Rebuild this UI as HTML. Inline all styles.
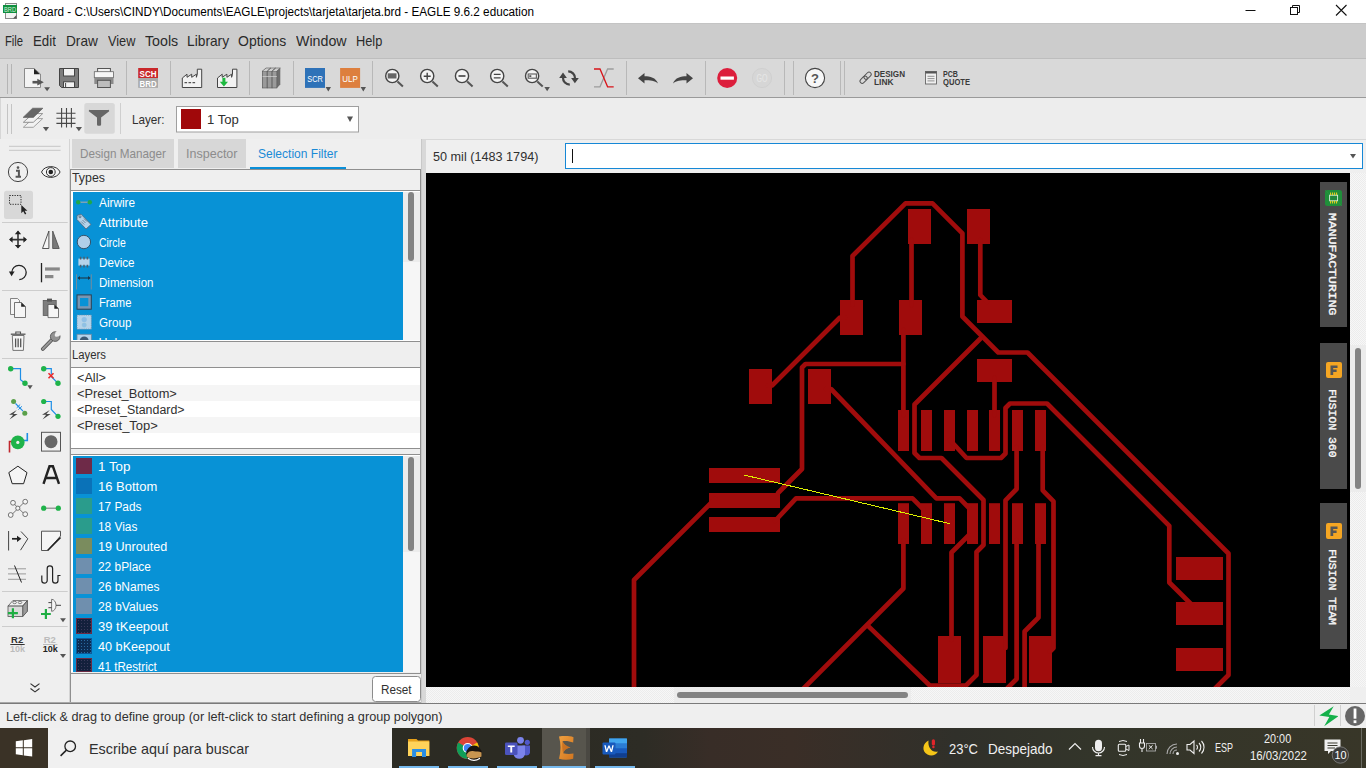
<!DOCTYPE html>
<html><head><meta charset="utf-8"><title>EAGLE</title>
<style>
*{margin:0;padding:0;box-sizing:border-box}
html,body{width:1366px;height:768px;overflow:hidden;background:#efefef;font-family:"Liberation Sans",sans-serif;position:relative}
.a{position:absolute}
.t{position:absolute;white-space:nowrap;line-height:1;font-family:"Liberation Sans",sans-serif}
svg{display:block}
</style></head><body>
<div class="a" style="left:0px;top:0px;width:1366px;height:23px;background:#ffffff;"></div>
<div class="a" style="left:0px;top:23px;width:1366px;height:35px;background:#cccccc;"></div>
<div class="a" style="left:0px;top:23px;width:1366px;height:1px;background:#c4c4c4;"></div>
<div class="a" style="left:0px;top:58px;width:1366px;height:1px;background:#bdbdbd;"></div>
<div class="a" style="left:0px;top:59px;width:1366px;height:38px;background:#d9d9d9;"></div>
<div class="a" style="left:0px;top:97px;width:1366px;height:1px;background:#9a9a9a;"></div>
<div class="a" style="left:0px;top:98px;width:1366px;height:41px;background:#ededed;"></div>
<div class="a" style="left:0px;top:139px;width:1366px;height:1px;background:#d8d8d8;"></div>
<div class="a" style="left:0px;top:98px;width:1px;height:630px;background:#d6d6d6;"></div>
<svg class="a" style="left:0px;top:0px;" width="22" height="22" viewBox="0 0 22 22"><rect x="5.5" y="3.5" width="11" height="15" fill="#f4f4f4" stroke="#8a8a8a"/>
<path d="M13 18.5 L16.5 15 L16.5 18.5Z" fill="#555"/>
<rect x="3" y="5" width="14" height="8" fill="#0f8f3f"/>
<text x="10" y="11.6" font-size="6.5" fill="#d8f0d8" text-anchor="middle" font-family="Liberation Sans" textLength="12" lengthAdjust="spacingAndGlyphs">BRD</text></svg>
<span id="t1" class="t" style="left:23.00px;top:6.00px;font-size:12.00px;color:#000;font-weight:normal;transform:scaleX(0.9772);transform-origin:0 0;">2 Board - C:\Users\CINDY\Documents\EAGLE\projects\tarjeta\tarjeta.brd - EAGLE 9.6.2 education</span>
<svg class="a" style="left:1240px;top:0px;" width="120" height="22" viewBox="0 0 120 22"><path d="M5.5 10.5h10" stroke="#111" stroke-width="1"/>
<rect x="50.5" y="7.5" width="7" height="7" fill="none" stroke="#111"/>
<path d="M52.5 7.5v-2h7v7h-2" fill="none" stroke="#111"/>
<path d="M96 5 L106.5 15.5 M106.5 5 L96 15.5" stroke="#111" stroke-width="1.1"/></svg>
<span id="t2" class="t" style="left:5.10px;top:34.00px;font-size:14.50px;color:#2a2a2a;font-weight:normal;transform:scaleX(0.7743);transform-origin:0 0;">File</span>
<span id="t3" class="t" style="left:33.20px;top:34.00px;font-size:14.50px;color:#2a2a2a;font-weight:normal;transform:scaleX(0.9160);transform-origin:0 0;">Edit</span>
<span id="t4" class="t" style="left:66.10px;top:34.00px;font-size:14.50px;color:#2a2a2a;font-weight:normal;transform:scaleX(0.9396);transform-origin:0 0;">Draw</span>
<span id="t5" class="t" style="left:107.50px;top:34.00px;font-size:14.50px;color:#2a2a2a;font-weight:normal;transform:scaleX(0.8790);transform-origin:0 0;">View</span>
<span id="t6" class="t" style="left:144.50px;top:34.00px;font-size:14.50px;color:#2a2a2a;font-weight:normal;transform:scaleX(0.9805);transform-origin:0 0;">Tools</span>
<span id="t7" class="t" style="left:186.70px;top:34.00px;font-size:14.50px;color:#2a2a2a;font-weight:normal;transform:scaleX(0.9497);transform-origin:0 0;">Library</span>
<span id="t8" class="t" style="left:238.30px;top:34.00px;font-size:14.50px;color:#2a2a2a;font-weight:normal;transform:scaleX(0.9643);transform-origin:0 0;">Options</span>
<span id="t9" class="t" style="left:295.80px;top:34.00px;font-size:14.50px;color:#2a2a2a;font-weight:normal;transform:scaleX(0.9810);transform-origin:0 0;">Window</span>
<span id="t10" class="t" style="left:355.50px;top:34.00px;font-size:14.50px;color:#2a2a2a;font-weight:normal;transform:scaleX(0.8817);transform-origin:0 0;">Help</span>
<svg class="a" style="left:0px;top:56px;" width="1000" height="44" viewBox="0 56 1000 44"><path d="M7.5 64v30M11.5 64v30" stroke="#b4b4b4" stroke-width="1"/><path d="M126.5 61v34" stroke="#b8b8b8" stroke-width="1"/><path d="M170.5 61v34" stroke="#b8b8b8" stroke-width="1"/><path d="M249.5 61v34" stroke="#b8b8b8" stroke-width="1"/><path d="M293.5 61v34" stroke="#b8b8b8" stroke-width="1"/><path d="M372.5 61v34" stroke="#b8b8b8" stroke-width="1"/><path d="M626.5 61v34" stroke="#b8b8b8" stroke-width="1"/><path d="M705.5 61v34" stroke="#b8b8b8" stroke-width="1"/><path d="M784.5 61v34" stroke="#b8b8b8" stroke-width="1"/><path d="M793.5 61v34" stroke="#b8b8b8" stroke-width="1"/><path d="M840.5 61v34" stroke="#b8b8b8" stroke-width="1"/><path d="M844.5 61v34" stroke="#b8b8b8" stroke-width="1"/><path d="M24.5 68.5H34L40.5 74V87.5H24.5Z" fill="#f3f3f3" stroke="#8a8a8a"/><path d="M34 68.5L40 74.3H34Z" fill="#222"/><path d="M32.5 82.2H38.5" stroke="#555" stroke-width="2.6"/><path d="M37.3 78.8L43.8 82.2L37.3 85.6Z" fill="#555"/><path d="M44.2 87.3H50L47.1 91.3Z" fill="#555"/><path d="M59.5 68.5H78.5V87.5H61.5L59.5 85.5Z" fill="#7d7d7d" stroke="#444"/><rect x="63.5" y="68.5" width="11" height="7.5" fill="#f2f2f2" stroke="#444"/><rect x="63.5" y="81.8" width="11" height="5.7" fill="#f2f2f2" stroke="#444"/><path d="M65.6 83v4" stroke="#444" stroke-width="1"/><rect x="97.6" y="68.5" width="12.8" height="7.5" fill="#f2f2f2" stroke="#555"/><rect x="94.3" y="71.7" width="19.2" height="6" fill="#f6f6f6" stroke="#666" stroke-width="0.8"/><rect x="94.3" y="77.7" width="19.2" height="6.3" fill="#8a8a8a"/><rect x="97.6" y="80.3" width="12.8" height="7.2" fill="#bdbdbd" stroke="#555"/><rect x="138.2" y="68" width="19.8" height="10" fill="#c9282b"/><rect x="138.2" y="78" width="19.8" height="9.8" fill="#a9a9a9"/><text x="148.1" y="76.6" font-size="9" font-weight="bold" fill="#fff" text-anchor="middle" font-family="Liberation Sans" textLength="17" lengthAdjust="spacingAndGlyphs">SCH</text><text x="148.1" y="86.5" font-size="9" font-weight="bold" fill="#fff" text-anchor="middle" font-family="Liberation Sans" textLength="17" lengthAdjust="spacingAndGlyphs">BRD</text><path d="M182.3 87.5V78L187 74.2V77.3L191.7 74.2V77.3L196.4 74.2V77.3L197.3 74.2V69.2H201.7V87.5Z" fill="#f2f2f2" stroke="#444" stroke-width="1"/><path d="M217.5 87.5V78L222.2 74.2V77.3L226.9 74.2V77.3L231.6 74.2V77.3L232.5 74.2V69.2H236.9V87.5Z" fill="#f2f2f2" stroke="#444" stroke-width="1"/><path d="M184.5 82.6h2.6M188.5 82.6h2.6M192.5 82.6h2.6" stroke="#555" stroke-width="1.2"/><path d="M222.4 77.8h3v4h2.6l-4.1 4.6l-4.1-4.6h2.6z" fill="#1db93f"/><path d="M262.5 71.5L266 68H280.3V84.5L277 88H262.5Z" fill="#6e6e6e"/><rect x="262.3" y="71" width="4.8" height="17" fill="#9a9a9a" stroke="#555" stroke-width="0.6"/><rect x="267.2" y="71" width="4.8" height="17" fill="#9a9a9a" stroke="#555" stroke-width="0.6"/><rect x="272.1" y="71" width="4.8" height="17" fill="#9a9a9a" stroke="#555" stroke-width="0.6"/><path d="M262.5 71L266 68h4.8l-3.5 3M267.3 71l3.5-3h4.8l-3.5 3M272.2 71l3.5-3h4.6l-3.4 3" fill="#cfcfcf" stroke="#555" stroke-width="0.6"/><path d="M262.5 76.5h14.4" stroke="#d6d6d6" stroke-width="0.7"/><rect x="305" y="68" width="20" height="19.9" fill="#2e72b8"/><text x="315" y="81.6" font-size="9.5" fill="#fff" text-anchor="middle" font-family="Liberation Sans" textLength="15.5" lengthAdjust="spacingAndGlyphs">SCR</text><path d="M325.6 87.1H331L328.3 91.5Z" fill="#555"/><rect x="340.1" y="68" width="20" height="19.9" fill="#dd7f3e"/><text x="350.1" y="81.6" font-size="9.5" fill="#fff" text-anchor="middle" font-family="Liberation Sans" textLength="15.5" lengthAdjust="spacingAndGlyphs">ULP</text><path d="M360.6 87.1H366L363.3 91.5Z" fill="#555"/><circle cx="392.3" cy="76" r="6.6" fill="#f4f4f4" stroke="#444" stroke-width="1.4"/><path d="M397.5 81.6L402.9 86.6" stroke="#555" stroke-width="2"/><rect x="387.7" y="73.3" width="8.8" height="5.2" fill="#666"/><circle cx="427.2" cy="76" r="6.6" fill="#f4f4f4" stroke="#444" stroke-width="1.4"/><path d="M432.4 81.6L437.8 86.6" stroke="#555" stroke-width="2"/><path d="M423.7 76.2h7M427.2 72.7v7" stroke="#444" stroke-width="1.4"/><circle cx="462" cy="76" r="6.6" fill="#f4f4f4" stroke="#444" stroke-width="1.4"/><path d="M467.2 81.6L472.6 86.6" stroke="#555" stroke-width="2"/><path d="M458.5 76h7" stroke="#555" stroke-width="1.8"/><circle cx="497.2" cy="76" r="6.6" fill="#f4f4f4" stroke="#444" stroke-width="1.4"/><path d="M502.4 81.6L507.8 86.6" stroke="#555" stroke-width="2"/><path d="M493.8 74.3h6.8M493.8 77.8h6.8" stroke="#444" stroke-width="1.3"/><circle cx="532.1" cy="76" r="6.6" fill="#f4f4f4" stroke="#444" stroke-width="1.4"/><path d="M537.3 81.6L542.7 86.6" stroke="#555" stroke-width="2"/><rect x="528.2" y="74" width="8.2" height="4.2" fill="none" stroke="#666" stroke-width="1.2"/><rect x="529.3" y="75.2" width="2" height="1.8" fill="#555"/><path d="M544.4 87.1H549.9L547.15 91.2Z" fill="#555"/><path d="M563 77.5A6.8 6.8 0 0 0 569.8 84.6M568.2 71.4A6.8 6.8 0 0 1 575 78.2" fill="none" stroke="#444" stroke-width="2.2"/><path d="M559.2 77.9H566.9L563 72.4ZM571.1 78H578.8L574.9 83.2Z" fill="#444"/><path d="M594 86.8H600L607.6 69H613.7" fill="none" stroke="#9c9c9c" stroke-width="1.3"/><path d="M594 69H600L607.6 86.8H613.7" fill="none" stroke="#d8141a" stroke-width="1.3"/><path d="M638 78.2L644.5 73V76.2C650 76.2 656 77.5 658 83.5C655 80.8 650 80.3 644.5 80.3V83.5Z" fill="#444"/><path d="M693 78.2L686.5 73V76.2C681 76.2 675 77.5 673 83.5C676 80.8 681 80.3 686.5 80.3V83.5Z" fill="#444"/><circle cx="727.2" cy="78" r="10" fill="#dc1e3c"/><rect x="720.5" y="76.5" width="13.4" height="3.2" fill="#fff"/><circle cx="762" cy="78" r="9.6" fill="#d6d6d6" stroke="#cdcdcd" stroke-width="0.8"/><text x="762" y="81.8" font-size="10" fill="#e6e6e6" text-anchor="middle" font-family="Liberation Sans" textLength="11" lengthAdjust="spacingAndGlyphs">GO</text><circle cx="815" cy="78" r="9.6" fill="#f7f7f7" stroke="#444" stroke-width="1.1"/><text x="815" y="82.8" font-size="13" font-weight="bold" fill="#555" text-anchor="middle" font-family="Liberation Sans">?</text><g transform="rotate(-45 865.6 77.7)" fill="none" stroke="#555" stroke-width="1"><rect x="858.6" y="75.5" width="8.4" height="4.4" rx="2.2"/><rect x="864.2" y="75.5" width="8.4" height="4.4" rx="2.2"/></g><rect x="925.5" y="71.5" width="11" height="12.5" fill="#f0f0f0" stroke="#666" stroke-width="0.9"/><rect x="925.5" y="71.5" width="11" height="2" fill="#555"/><path d="M927.5 76.3h7M927.5 78.6h7M927.5 80.9h7" stroke="#777" stroke-width="0.8"/></svg>
<span id="t11" class="t" style="left:874.30px;top:70.00px;font-size:8.30px;color:#3a3a3a;font-weight:bold;transform:scaleX(0.9745);transform-origin:0 0;">DESIGN</span>
<span id="t12" class="t" style="left:874.30px;top:78.00px;font-size:8.30px;color:#3a3a3a;font-weight:bold;transform:scaleX(1.0073);transform-origin:0 0;">LINK</span>
<span id="t13" class="t" style="left:942.80px;top:70.00px;font-size:8.30px;color:#3a3a3a;font-weight:bold;transform:scaleX(0.8556);transform-origin:0 0;">PCB</span>
<span id="t14" class="t" style="left:942.80px;top:78.00px;font-size:8.30px;color:#3a3a3a;font-weight:bold;transform:scaleX(0.9148);transform-origin:0 0;">QUOTE</span>
<svg class="a" style="left:0px;top:98px;" width="370" height="41" viewBox="0 98 370 41"><path d="M7.5 104v30M11.5 104v30" stroke="#c4c4c4" stroke-width="1"/><path d="M23.3 127.3L33 118.6H42.7L33.3 127.3Z" fill="#f2f2f2" stroke="#999" stroke-width="0.9"/><path d="M23.3 122.3L33 113.6H42.7L33.3 122.3Z" fill="#f2f2f2" stroke="#888" stroke-width="0.9"/><path d="M23.1 117.4L32.6 108.2H42.9L33.4 117.4Z" fill="#666" stroke="#555" stroke-width="0.6"/><path d="M42.9 126.9H49.1L46 131.3Z" fill="#555"/><path d="M61.6 107.9v19.7M66.5 107.9v19.7M71.4 107.9v19.7M56.4 113.3h19.1M56.4 118.3h19.1M56.4 123.4h19.1" stroke="#474747" stroke-width="1.1"/><path d="M75.8 126.9H82L78.9 131.3Z" fill="#555"/><rect x="84.3" y="103.1" width="30.5" height="30.7" rx="2.5" fill="#d8d8d8"/><path d="M90 109.9H108A1 1 0 0 1 108.9 111.6L101.1 117.5V124.6A1.2 1.2 0 0 1 99.9 125.8H98.2A1.2 1.2 0 0 1 97 124.6V117.5L89.1 111.6A1 1 0 0 1 90 109.9Z" fill="#666"/><path d="M120.5 103v31" stroke="#cfcfcf" stroke-width="1"/><rect x="176.5" y="106.5" width="182" height="25.5" fill="#fff" stroke="#9f9f9f"/><rect x="181" y="109" width="20" height="20" fill="#a0080a"/><path d="M347 116.5H353L350 122Z" fill="#555"/></svg>
<span id="t15" class="t" style="left:132.00px;top:113.00px;font-size:13.00px;color:#303030;font-weight:normal;transform:scaleX(0.8993);transform-origin:0 0;">Layer:</span>
<span id="t16" class="t" style="left:207.30px;top:113.00px;font-size:13.00px;color:#303030;font-weight:normal;transform:scaleX(1.0070);transform-origin:0 0;">1 Top</span>
<div class="a" style="left:0px;top:139px;width:69px;height:564px;background:#efefef;"></div>
<div class="a" style="left:69px;top:139px;width:1px;height:564px;background:#d4d4d4;"></div>
<div class="a" style="left:70px;top:139px;width:351px;height:564px;background:#efefef;"></div>
<div class="a" style="left:72px;top:139px;width:101.6px;height:29.3px;background:#d7d7d7;"></div>
<div class="a" style="left:178px;top:139px;width:67.6px;height:29.3px;background:#d7d7d7;"></div>
<div class="a" style="left:250px;top:166.7px;width:96px;height:3px;background:#0a8fd8;"></div>
<span id="t17" class="t" style="left:80.40px;top:148.00px;font-size:12.80px;color:#8c8c8c;font-weight:normal;transform:scaleX(0.9137);transform-origin:0 0;">Design Manager</span>
<span id="t18" class="t" style="left:186.30px;top:148.00px;font-size:12.80px;color:#8c8c8c;font-weight:normal;transform:scaleX(0.9783);transform-origin:0 0;">Inspector</span>
<span id="t19" class="t" style="left:258.40px;top:148.00px;font-size:12.80px;color:#1a8ad6;font-weight:normal;transform:scaleX(0.9393);transform-origin:0 0;">Selection Filter</span>
<div class="a" style="left:70px;top:169px;width:351px;height:1px;background:#8f8f8f;"></div>
<div class="a" style="left:70px;top:169px;width:1px;height:172px;background:#8f8f8f;"></div>
<div class="a" style="left:420px;top:169px;width:1px;height:172px;background:#8f8f8f;"></div>
<div class="a" style="left:70px;top:190px;width:351px;height:1px;background:#8f8f8f;"></div>
<div class="a" style="left:70px;top:340.8px;width:351px;height:1px;background:#8f8f8f;"></div>
<span id="t20" class="t" style="left:72.30px;top:172.00px;font-size:12.50px;color:#303030;font-weight:normal;transform:scaleX(0.9892);transform-origin:0 0;">Types</span>
<div class="a" style="left:71px;top:191px;width:349px;height:149.8px;background:#ffffff;"></div>
<div class="a" style="left:73px;top:192px;width:330px;height:148px;background:#0892d6;"></div>
<div class="a" style="left:403px;top:192px;width:17px;height:148px;background:#f6f6f6;"></div>
<div class="a" style="left:403px;top:192px;width:17px;height:70px;background:#ececec;"></div>
<div class="a" style="left:408.1px;top:192.2px;width:6px;height:68.7px;background:#838383;border-radius:3px"></div>
<span id="t21" class="t" style="left:98.60px;top:197.00px;font-size:12.50px;color:#ffffff;font-weight:normal;transform:scaleX(0.9449);transform-origin:0 0;">Airwire</span>
<span id="t22" class="t" style="left:98.60px;top:217.00px;font-size:12.50px;color:#ffffff;font-weight:normal;transform:scaleX(1.0545);transform-origin:0 0;">Attribute</span>
<span id="t23" class="t" style="left:98.60px;top:237.00px;font-size:12.50px;color:#ffffff;font-weight:normal;transform:scaleX(0.8356);transform-origin:0 0;">Circle</span>
<span id="t24" class="t" style="left:98.60px;top:257.00px;font-size:12.50px;color:#ffffff;font-weight:normal;transform:scaleX(0.9315);transform-origin:0 0;">Device</span>
<span id="t25" class="t" style="left:98.60px;top:277.00px;font-size:12.50px;color:#ffffff;font-weight:normal;transform:scaleX(0.9228);transform-origin:0 0;">Dimension</span>
<span id="t26" class="t" style="left:98.60px;top:297.00px;font-size:12.50px;color:#ffffff;font-weight:normal;transform:scaleX(0.8969);transform-origin:0 0;">Frame</span>
<span id="t27" class="t" style="left:98.60px;top:317.00px;font-size:12.50px;color:#ffffff;font-weight:normal;transform:scaleX(0.9324);transform-origin:0 0;">Group</span>
<div class="a" style="left:73px;top:332px;width:330px;height:8px;overflow:hidden"><span class="t" style="left:25.6px;top:5.00px;font-size:12.5px;color:#fff">Holes</span></div>
<svg class="a" style="left:73px;top:192px" width="330" height="148" viewBox="73 192 330 148"><path d="M79.5 202.2H88.5" stroke="#9aa7b0" stroke-width="1.2"/><circle cx="78.2" cy="202.2" r="2.2" fill="#1ea84a"/><circle cx="89.8" cy="202.2" r="2.2" fill="#1ea84a"/><path d="M77 215.5L81 214.2L91 224.5L86 229L77 219.5Z" fill="#b5d3ea" stroke="#567" stroke-width="0.8"/><circle cx="80" cy="216.8" r="1" fill="none" stroke="#345" stroke-width="0.6"/><path d="M82.5 220l3 3M84 218.6l3 3M81.2 221.5l3 3" stroke="#456" stroke-width="0.6"/><circle cx="83.9" cy="242" r="6.7" fill="#b0cfe9" stroke="#2f4a60" stroke-width="0.9"/><rect x="78.4" y="258.6" width="11.2" height="7" fill="#b5d3ea"/><path d="M80.6 256.8v10.6M84 256.8v10.6M87.4 256.8v10.6" stroke="#4a6070" stroke-width="1.5" stroke-dasharray="2.6 5.4 2.6"/><path d="M76.5 274.3v15.2M91.3 274.3v15.2" stroke="#7a8c9a" stroke-width="0.9"/><path d="M78 278H90" stroke="#1d3548" stroke-width="1.1"/><path d="M77.5 278l2.5-2v4zM90.5 278l-2.5-2v4z" fill="#1d3548"/><rect x="77" y="294.9" width="14.3" height="14.3" fill="#7897b4" stroke="#2a3f52" stroke-width="1"/><rect x="80" y="298" width="8.3" height="8.2" fill="#0892d6"/><rect x="77" y="315" width="14.4" height="14.2" fill="#b5d3ea" stroke="#6a8aa4" stroke-width="0.8" stroke-dasharray="1.2 1"/><circle cx="84.2" cy="319.5" r="2.6" fill="#8fc0e6"/><circle cx="84.2" cy="325" r="2.3" fill="#8fc0e6" stroke="#9cc" stroke-width="0.3"/><rect x="77" y="334.3" width="14.4" height="8" fill="#b5d3ea" stroke="#6a8aa4" stroke-width="0.8"/><circle cx="84.2" cy="341" r="4.5" fill="#3d5a73"/></svg>
<div class="a" style="left:70px;top:366.8px;width:351px;height:1px;background:#8f8f8f;"></div>
<div class="a" style="left:70px;top:341px;width:1px;height:362px;background:#8f8f8f;"></div>
<div class="a" style="left:420px;top:341px;width:1px;height:333px;background:#8f8f8f;"></div>
<span id="t28" class="t" style="left:71.50px;top:349.00px;font-size:12.50px;color:#303030;font-weight:normal;transform:scaleX(0.9059);transform-origin:0 0;">Layers</span>
<div class="a" style="left:71px;top:367.8px;width:349px;height:80.3px;background:#ffffff;"></div>
<div class="a" style="left:72px;top:385px;width:348px;height:16px;background:#f5f5f5;"></div>
<div class="a" style="left:72px;top:417px;width:348px;height:16px;background:#f5f5f5;"></div>
<span id="t29" class="t" style="left:76.50px;top:372.00px;font-size:12.50px;color:#303030;font-weight:normal;transform:scaleX(1.0140);transform-origin:0 0;">&lt;All&gt;</span>
<span id="t30" class="t" style="left:76.50px;top:388.00px;font-size:12.50px;color:#303030;font-weight:normal;transform:scaleX(1.0259);transform-origin:0 0;">&lt;Preset_Bottom&gt;</span>
<span id="t31" class="t" style="left:76.50px;top:404.00px;font-size:12.50px;color:#303030;font-weight:normal;transform:scaleX(0.9924);transform-origin:0 0;">&lt;Preset_Standard&gt;</span>
<span id="t32" class="t" style="left:76.50px;top:420.00px;font-size:12.50px;color:#303030;font-weight:normal;transform:scaleX(1.0393);transform-origin:0 0;">&lt;Preset_Top&gt;</span>
<div class="a" style="left:70px;top:448px;width:351px;height:1px;background:#8f8f8f;"></div>
<div class="a" style="left:70px;top:454.3px;width:351px;height:1px;background:#8f8f8f;"></div>
<div class="a" style="left:71px;top:455.3px;width:349px;height:217px;background:#ffffff;"></div>
<div class="a" style="left:73px;top:456px;width:330px;height:215.5px;background:#0892d6;"></div>
<div class="a" style="left:403px;top:456px;width:17px;height:216px;background:#f6f6f6;"></div>
<div class="a" style="left:403px;top:456px;width:17px;height:96px;background:#ececec;"></div>
<div class="a" style="left:408.1px;top:456.5px;width:6px;height:94px;background:#838383;border-radius:3px"></div>
<div class="a" style="left:70px;top:672.5px;width:351px;height:1px;background:#8f8f8f;"></div>
<span id="t33" class="t" style="left:98.40px;top:461.00px;font-size:12.50px;color:#ffffff;font-weight:normal;transform:scaleX(1.0672);transform-origin:0 0;">1 Top</span>
<div class="a" style="left:76px;top:458px;width:16px;height:16px;background:#6e2a48;"></div>
<span id="t34" class="t" style="left:98.40px;top:481.00px;font-size:12.50px;color:#ffffff;font-weight:normal;transform:scaleX(1.0389);transform-origin:0 0;">16 Bottom</span>
<div class="a" style="left:76px;top:478px;width:16px;height:16px;background:#0a72b8;"></div>
<span id="t35" class="t" style="left:98.40px;top:501.00px;font-size:12.50px;color:#ffffff;font-weight:normal;transform:scaleX(0.9460);transform-origin:0 0;">17 Pads</span>
<div class="a" style="left:76px;top:498px;width:16px;height:16px;background:#2a9c8c;"></div>
<span id="t36" class="t" style="left:98.40px;top:521.00px;font-size:12.50px;color:#ffffff;font-weight:normal;transform:scaleX(0.9501);transform-origin:0 0;">18 Vias</span>
<div class="a" style="left:76px;top:518px;width:16px;height:16px;background:#2a9c8c;"></div>
<span id="t37" class="t" style="left:98.40px;top:541.00px;font-size:12.50px;color:#ffffff;font-weight:normal;transform:scaleX(1.0071);transform-origin:0 0;">19 Unrouted</span>
<div class="a" style="left:76px;top:538px;width:16px;height:16px;background:#7a8c5e;"></div>
<span id="t38" class="t" style="left:98.40px;top:561.00px;font-size:12.50px;color:#ffffff;font-weight:normal;transform:scaleX(0.9513);transform-origin:0 0;">22 bPlace</span>
<div class="a" style="left:76px;top:558px;width:16px;height:16px;background:#6f8fae;"></div>
<span id="t39" class="t" style="left:98.40px;top:581.00px;font-size:12.50px;color:#ffffff;font-weight:normal;transform:scaleX(0.9603);transform-origin:0 0;">26 bNames</span>
<div class="a" style="left:76px;top:578px;width:16px;height:16px;background:#6f8fae;"></div>
<span id="t40" class="t" style="left:98.40px;top:601.00px;font-size:12.50px;color:#ffffff;font-weight:normal;transform:scaleX(0.9753);transform-origin:0 0;">28 bValues</span>
<div class="a" style="left:76px;top:598px;width:16px;height:16px;background:#6f8fae;"></div>
<span id="t41" class="t" style="left:98.40px;top:621.00px;font-size:12.50px;color:#ffffff;font-weight:normal;transform:scaleX(1.0412);transform-origin:0 0;">39 tKeepout</span>
<div class="a" style="left:76px;top:618px;width:16px;height:16px;background:#13203c;border:1px solid #6a2a44;background-image:radial-gradient(#3a3a5a 0.6px,transparent 0.7px);background-size:3px 3px"></div>
<span id="t42" class="t" style="left:98.40px;top:641.00px;font-size:12.50px;color:#ffffff;font-weight:normal;transform:scaleX(1.0126);transform-origin:0 0;">40 bKeepout</span>
<div class="a" style="left:76px;top:638px;width:16px;height:16px;background:#0c2c52;border:1px solid #0a5a9a;background-image:radial-gradient(#2a6aa0 0.6px,transparent 0.7px);background-size:3px 3px"></div>
<div class="a" style="left:73px;top:656px;width:330px;height:15px;overflow:hidden"><span id="tr41" class="t" style="left:25.4px;top:5.00px;font-size:12.5px;color:#fff;transform:scaleX(0.93);transform-origin:0 0">41 tRestrict</span></div>
<div class="a" style="left:76px;top:658px;width:16px;height:13.5px;background:#13203c;border:1px solid #6a2a44;background-image:radial-gradient(#3a3a5a 0.6px,transparent 0.7px);background-size:3px 3px"></div>
<div class="a" style="left:372px;top:676px;width:48.5px;height:25.5px;background:#fff;border:1.4px solid #8c8c8c;border-radius:3.5px"></div>
<span id="t43" class="t" style="left:381.40px;top:684.00px;font-size:12.50px;color:#303030;font-weight:normal;transform:scaleX(0.9370);transform-origin:0 0;">Reset</span>
<div class="a" style="left:0px;top:702px;width:1366px;height:1px;background:#a8a8a8;"></div>
<div class="a" style="left:0px;top:703px;width:1366px;height:1px;background:#7a7a7a;"></div>
<svg class="a" style="left:0px;top:139px;" width="70" height="564" viewBox="0 139 70 564"><path d="M9 146.3H60.6M9 150.3H60.6" stroke="#c6c6c6" stroke-width="1"/><path d="M2 222.5H67.7" stroke="#cdcdcd" stroke-width="1"/><path d="M2 290.5H67.7" stroke="#cdcdcd" stroke-width="1"/><path d="M2 358.5H67.7" stroke="#cdcdcd" stroke-width="1"/><path d="M2 591.5H67.7" stroke="#cdcdcd" stroke-width="1"/><path d="M2 626.5H67.7" stroke="#cdcdcd" stroke-width="1"/><circle cx="18" cy="172" r="9.6" fill="none" stroke="#444" stroke-width="1"/><circle cx="18" cy="167.6" r="1.3" fill="#555"/><path d="M16 170.8H18.9V176.6M15.6 176.8H21" stroke="#555" stroke-width="2" fill="none"/><path d="M41.5 172C44.5 164.8 57.1 164.8 60.1 172C57.1 179.2 44.5 179.2 41.5 172Z" fill="#f5f5f5" stroke="#333" stroke-width="1"/><circle cx="50.8" cy="172" r="4.4" fill="none" stroke="#333" stroke-width="1"/><circle cx="50.8" cy="172" r="2.3" fill="#222"/><rect x="4" y="190.8" width="29" height="28.2" rx="2.5" fill="#d8d8d8"/><rect x="9.5" y="195.5" width="11.5" height="8.8" fill="none" stroke="#333" stroke-width="1" stroke-dasharray="1.3 1.2"/><path d="M21.3 205V213.3L23.2 211.3L25 214.5L26.3 213.8L24.6 210.7H27.4Z" fill="#222"/><path d="M10 239.6H26M18 231.6V247.6" stroke="#333" stroke-width="1.6"/><path d="M9 239.6L12.6 236.4V242.8ZM27 239.6L23.4 236.4V242.8ZM18 230.6L14.8 234.2H21.2ZM18 248.6L14.8 245H21.2Z" fill="#222"/><path d="M48.9 231L42.5 248.5H48.9Z" fill="#f5f5f5" stroke="#444" stroke-width="0.9"/><path d="M52.7 231L59.2 248.5H52.7Z" fill="#7a7a7a" stroke="#555" stroke-width="0.9"/><path d="M11.8 272.4A7.2 7.2 0 1 1 19.3 279.7" fill="none" stroke="#222" stroke-width="1.3"/><path d="M8.9 271.6H14.6L11.6 276.2Z" fill="#222"/><path d="M41.5 263V282.3" stroke="#222" stroke-width="1.3"/><rect x="45" y="267.4" width="14.8" height="3.2" fill="#888"/><rect x="45" y="275" width="8.4" height="3.2" fill="#888"/><path d="M10.5 298.5H17.5L19.5 300.5V314.5H10.5Z" fill="#f5f5f5" stroke="#666" stroke-width="0.8"/><path d="M14.5 302.5H21.5L25.5 306.5V317.5H14.5Z" fill="#f5f5f5" stroke="#555" stroke-width="0.8"/><path d="M21.2 302.5L25.5 306.8H21.2Z" fill="#222"/><rect x="43.2" y="300.4" width="13" height="15" fill="#7d7d7d" stroke="#555" stroke-width="0.8"/><rect x="47" y="298.6" width="5" height="3" fill="#555"/><path d="M48 304.5H54.5L58.5 308.5V317.6H48Z" fill="#f5f5f5" stroke="#555" stroke-width="0.8"/><path d="M54.3 304.5L58.5 308.7H54.3Z" fill="#222"/><path d="M10.8 334.2H25.5" stroke="#555" stroke-width="1.3"/><path d="M15.8 334V332H20.5V334" fill="none" stroke="#555" stroke-width="1.1"/><path d="M12.3 335.5H24L23.4 350.4H12.9Z" fill="#f5f5f5" stroke="#666" stroke-width="0.9"/><path d="M15.6 338.5V347.2M18.15 338.5V347.2M20.7 338.5V347.2" stroke="#555" stroke-width="1.3"/><path d="M42.8 349L51.6 340" stroke="#555" stroke-width="3.8" stroke-linecap="round"/><path d="M42.8 349L51.6 340" stroke="#999" stroke-width="1.8" stroke-linecap="round"/><circle cx="55.2" cy="336.6" r="4.8" fill="#929292" stroke="#555" stroke-width="0.9"/><circle cx="56.6" cy="334.9" r="1.9" fill="#efefef"/><path d="M55 333.1L57.6 330.3L61.4 334.2L58.5 336.6Z" fill="#efefef"/><path d="M10.7 368.7H20.5V379.6L25 383.3" fill="none" stroke="#1e8ee6" stroke-width="1.2"/><circle cx="10.7" cy="368.7" r="2.7" fill="#1fb34a"/><circle cx="25" cy="383.3" r="2.7" fill="#1fb34a"/><path d="M27.3 385.2H32.7L30 389.2Z" fill="#555"/><path d="M43.7 368.7H51.3V374.5M51.3 376.5L58 383.3" fill="none" stroke="#1e8ee6" stroke-width="1.2"/><circle cx="43.7" cy="368.7" r="2.7" fill="#1fb34a"/><circle cx="58" cy="383.3" r="2.7" fill="#1fb34a"/><path d="M48.5 373.3L53.5 378.3M53.5 373.3L48.5 378.3" stroke="#ea2a2a" stroke-width="1.6"/><circle cx="13.6" cy="401.5" r="2.5" fill="#5aa04a"/><circle cx="24.8" cy="413.2" r="2.5" fill="#5aa04a"/><path d="M15.5 403.5L23 411.2" stroke="#1e8ee6" stroke-width="1.1"/><path d="M16.7 407.8L20.2 404.5M18.4 409.6L21.9 406.3" stroke="#1e8ee6" stroke-width="1"/><path d="M16.8 410L9 414.8L13.2 414.8L9.5 419.5L17.6 414L13.3 414Z" fill="#444"/><path d="M43.7 401.5H51.3V409.5L57.8 416.3" fill="none" stroke="#1e8ee6" stroke-width="1.2"/><circle cx="43.7" cy="401.5" r="2.6" fill="#1fb34a"/><circle cx="58" cy="416.3" r="2.6" fill="#1fb34a"/><path d="M49.8 410L42 414.8L46.2 414.8L42.5 419.5L50.6 414L46.3 414Z" fill="#444"/><path d="M9.5 452.5V441.5H12" fill="none" stroke="#c0272d" stroke-width="1.6"/><path d="M23 440.5H27.3V433" fill="none" stroke="#1e8ee6" stroke-width="1.6"/><circle cx="17.8" cy="442.4" r="6.8" fill="#1fb34a"/><circle cx="17.8" cy="442.4" r="1.6" fill="#efefef"/><rect x="41.5" y="432.3" width="19" height="18.8" fill="#f0f0f0" stroke="#555" stroke-width="1"/><circle cx="51" cy="441.7" r="6.5" fill="#666"/><path d="M17.9 466.2L27 472.6L23.6 483.7H12.2L8.8 472.6Z" fill="#f5f5f5" stroke="#222" stroke-width="1"/><path d="M43.5 483.8L49.5 466.3H52.9L59 483.8M45.7 478H56.8" fill="none" stroke="#222" stroke-width="2.4"/><path d="M11 500.8L25.7 515.4M25.7 500.8L11 515.4" stroke="#666" stroke-width="0.9"/><circle cx="13" cy="502.8" r="2.4" fill="#f5f5f5" stroke="#555" stroke-width="0.8"/><circle cx="25.2" cy="501.7" r="2.4" fill="#f5f5f5" stroke="#555" stroke-width="0.8"/><circle cx="10.7" cy="515" r="2.4" fill="#f5f5f5" stroke="#555" stroke-width="0.8"/><circle cx="25.2" cy="514.2" r="2.4" fill="#f5f5f5" stroke="#555" stroke-width="0.8"/><circle cx="17.8" cy="508.2" r="2.1" fill="#f5f5f5" stroke="#555" stroke-width="0.8"/><path d="M43.8 508.2H58" stroke="#888" stroke-width="1.2"/><circle cx="43.7" cy="508.2" r="2.6" fill="#1fb34a"/><circle cx="58.3" cy="508.2" r="2.6" fill="#1fb34a"/><path d="M8.6 531V550.5" stroke="#444" stroke-width="1"/><path d="M12 538.8H17.5" stroke="#222" stroke-width="1.7"/><path d="M17 535.7L21.4 538.8L17 541.9Z" fill="#222"/><path d="M21 531.5L27.8 538.8L20.5 550.2" fill="none" stroke="#444" stroke-width="1"/><path d="M41.5 531.2H60.5V536L47.6 550.5H41.5Z" fill="#f5f5f5" stroke="#444" stroke-width="0.9"/><path d="M47.6 550.5L60.5 537.5" stroke="#222" stroke-width="1.7"/><path d="M8 568.8H26M8 573.9H26M8 579.3H26" stroke="#9a9a9a" stroke-width="1"/><path d="M14.5 565.5L21.5 582.5" stroke="#222" stroke-width="1"/><path d="M41.8 575.5V580.5A2.7 2.7 0 0 0 47.2 580.5V568.5A2.7 2.7 0 0 1 52.6 568.5V580.5A2.7 2.7 0 0 0 58 580.5V575.5H60.5" fill="none" stroke="#222" stroke-width="1.2"/><path d="M8 606.1L12.8 600.6H27.4L22.7 606.1Z" fill="#efefef" stroke="#555" stroke-width="0.8"/><path d="M22.7 606.1L27.4 600.6V611.3L22.7 616.6Z" fill="#9a9a9a" stroke="#444" stroke-width="0.8"/><rect x="8" y="606.1" width="14.7" height="10.5" fill="#dadada" stroke="#555" stroke-width="0.8"/><ellipse cx="14.6" cy="602.5" rx="1.8" ry="1.2" fill="none" stroke="#555" stroke-width="0.7"/><ellipse cx="20" cy="602.5" rx="1.8" ry="1.2" fill="none" stroke="#555" stroke-width="0.7"/><path d="M7.9 613.2H17.9M12.9 608.2V618.2" stroke="#1fae43" stroke-width="2.2"/><path d="M51.6 599.3A4.4 6 0 0 1 51.6 611.3Z" fill="#f5f5f5" stroke="#555" stroke-width="0.8"/><path d="M48.4 602.6h3.2M48.4 607.7h3.2M56 605.3h5" stroke="#444" stroke-width="1"/><path d="M41 614H50.8M45.9 609.1V618.9" stroke="#1fae43" stroke-width="2.2"/><path d="M60.1 618.2H65.9L63 622.2Z" fill="#555"/><text x="17.2" y="643" font-size="9.5" font-weight="bold" fill="#333" text-anchor="middle" font-family="Liberation Sans">R2</text><path d="M10.3 644.5H24.7" stroke="#333" stroke-width="1"/><text x="17.5" y="652.3" font-size="9" font-weight="bold" fill="#bcbcbc" text-anchor="middle" font-family="Liberation Sans">10k</text><text x="49.8" y="643" font-size="9.5" font-weight="bold" fill="#bcbcbc" text-anchor="middle" font-family="Liberation Sans">R2</text><path d="M43 644.5H57.4" stroke="#bcbcbc" stroke-width="1"/><text x="50.2" y="652.3" font-size="9" font-weight="bold" fill="#222" text-anchor="middle" font-family="Liberation Sans">10k</text><path d="M60 654H66L63 658Z" fill="#555"/><path d="M30.5 683.6L35 687L39.5 683.6M30.5 688.5L35 691.9L39.5 688.5" fill="none" stroke="#333" stroke-width="1.1"/></svg>
<div class="a" style="left:421px;top:139px;width:5px;height:564px;background:#d8d8d8;"></div>
<div class="a" style="left:421px;top:139px;width:1px;height:564px;background:#c8c8c8;"></div>
<span id="t44" class="t" style="left:433.20px;top:151.00px;font-size:12.50px;color:#303030;font-weight:normal;transform:scaleX(1.0112);transform-origin:0 0;">50 mil (1483 1794)</span>
<div class="a" style="left:565px;top:143px;width:797.5px;height:26px;background:#fff;border:1.3px solid #1688d6"></div>
<div class="a" style="left:572px;top:149px;width:1px;height:14px;background:#111;"></div>
<svg class="a" style="left:1348px;top:150px;" width="10" height="10" viewBox="0 0 10 10"><path d="M2 4H8L5 8.5Z" fill="#555"/></svg>
<div class="a" style="left:426px;top:173px;width:924px;height:514px;background:#000;"></div>
<div class="a" style="left:1350px;top:173px;width:16px;height:514px;background:#f5f5f5;background-color:#f7f7f7;background-image:linear-gradient(45deg,#ececec 25%,transparent 25%,transparent 75%,#ececec 75%),linear-gradient(45deg,#ececec 25%,transparent 25%,transparent 75%,#ececec 75%);background-size:2px 2px;background-position:0 0,1px 1px"></div>
<div class="a" style="left:1350px;top:345px;width:16px;height:147px;background:#ececec;"></div>
<div class="a" style="left:1355.4px;top:348.3px;width:5.6px;height:140.7px;background:#838383;border-radius:3px"></div>
<div class="a" style="left:426px;top:687px;width:924px;height:16px;background:#f5f5f5;background-color:#f7f7f7;background-image:linear-gradient(45deg,#ececec 25%,transparent 25%,transparent 75%,#ececec 75%),linear-gradient(45deg,#ececec 25%,transparent 25%,transparent 75%,#ececec 75%);background-size:2px 2px;background-position:0 0,1px 1px"></div>
<div class="a" style="left:674px;top:687px;width:237px;height:16px;background:#ececec;"></div>
<div class="a" style="left:677.2px;top:692px;width:230.8px;height:5.6px;background:#838383;border-radius:3px"></div>
<div class="a" style="left:1350px;top:687px;width:16px;height:16px;background:#efefef;"></div>
<svg class="a" style="left:426px;top:173px;overflow:hidden" width="924" height="514" viewBox="426 173 924 514"><g fill="#a00c0c"><rect x="908" y="209" width="23" height="35"/><rect x="967" y="209" width="23" height="35"/><rect x="840" y="300" width="23" height="35"/><rect x="899" y="300" width="23" height="35"/><rect x="977" y="300" width="35" height="23"/><rect x="977" y="359" width="35" height="23"/><rect x="749" y="369" width="23" height="35"/><rect x="808" y="369" width="23" height="35"/><rect x="709" y="468" width="71" height="15"/><rect x="709" y="493" width="71" height="15"/><rect x="709" y="517" width="71" height="15"/><rect x="938" y="636" width="23" height="47"/><rect x="983" y="636" width="23" height="47"/><rect x="1029" y="636" width="23" height="47"/><rect x="1176" y="557" width="47" height="23"/><rect x="1176" y="602" width="47" height="23"/><rect x="1176" y="648" width="47" height="23"/><rect x="898" y="410" width="11" height="41"/><rect x="898" y="503.2" width="11" height="40.8"/><rect x="921" y="410" width="11" height="41"/><rect x="921" y="503.2" width="11" height="40.8"/><rect x="944" y="410" width="11" height="41"/><rect x="944" y="503.2" width="11" height="40.8"/><rect x="967" y="410" width="11" height="41"/><rect x="967" y="503.2" width="11" height="40.8"/><rect x="989" y="410" width="11" height="41"/><rect x="989" y="503.2" width="11" height="40.8"/><rect x="1012" y="410" width="11" height="41"/><rect x="1012" y="503.2" width="11" height="40.8"/><rect x="1035" y="410" width="11" height="41"/><rect x="1035" y="503.2" width="11" height="40.8"/></g><g fill="none" stroke="#a00c0c" stroke-width="4.7" stroke-linejoin="round" stroke-linecap="round"><polyline points="852.5,305 852.5,256 905.5,203.4 932.5,203.4 962.4,233.3 962.4,316.5 998.3,352.5 1027.5,352.5 1228.5,553.5 1228.5,675 1210,693.5"/><polyline points="981,338 914.5,404.5 914.5,453 919.5,458 941.5,458 983.5,500 983.5,545 976.5,552 976.5,675 965.8,685.7 930,685.7 867.5,625.4"/><polyline points="911.5,240 911.5,305"/><polyline points="903.4,330 903.4,415"/><polyline points="903.4,364 805.5,364 802,367.5 802,469 778,493"/><polyline points="980.3,240 980.3,295 987,302"/><polyline points="845,317.5 840,317.5 772,385.5 768,385.5"/><polyline points="826,389 831,389 936.4,498.4 959.6,498.4 969,508"/><polyline points="775,521 796,498.4 912.5,498.4 923.5,509.5"/><polyline points="715,499 634,580 634,700"/><polyline points="994.5,378 994.5,415"/><polyline points="950,440 966.5,458 1001,458 1005.5,453.5 1005.5,408 1010,403.5 1047,403.5 1169.3,525.8 1169.3,582.5 1192,605"/><polyline points="903.4,540 903.4,588.5 798,694"/><polyline points="969,535 951.5,552.5 951.5,640"/><polyline points="1016.6,447 1016.6,489 1005.5,500.3 1005.5,648"/><polyline points="1016.6,540 1016.6,679 1006,689.5"/><polyline points="1042.7,447 1042.7,490.3 1053.5,501.3 1053.5,648 1050,651.5"/><polyline points="1038.5,540 1038.5,617.5 1024.6,631.5 1024.6,695"/></g><path d="M744 475L949.5 523.6" stroke="#dcf000" stroke-width="1" fill="none" shape-rendering="crispEdges"/></svg>
<div class="a" style="left:1320px;top:182px;width:27.3px;height:145px;background:#4a4a4a;"></div>
<svg class="a" style="left:1325px;top:189.9px;" width="17" height="16" viewBox="0 0 17 16"><rect x="0" y="0" width="17" height="16" rx="2.5" fill="#1f8f3a"/><path d="M0 0L5 5M17 16L12 11" stroke="#2a9a40" stroke-width="0.6"/><rect x="4.6" y="5.2" width="8" height="5.6" fill="#22883a" stroke="#ddeedd" stroke-width="0.9"/><path d="M5.6 2.5v2.6M7.6 2.5v2.6M9.6 2.5v2.6M11.6 2.5v2.6M5.6 10.9v2.6M7.6 10.9v2.6M9.6 10.9v2.6M11.6 10.9v2.6" stroke="#f2d21a" stroke-width="1"/></svg>
<span id="t45" class="t" style="left:1337.60px;top:213.00px;font-size:11.60px;font-family:'Liberation Mono',monospace;color:#f6f6f6;-webkit-text-stroke:0.4px #f6f6f6;transform-origin:0 0;transform:rotate(90deg) scaleX(1.1332)">MANUFACTURING</span>
<div class="a" style="left:1320px;top:343px;width:27.3px;height:146px;background:#4a4a4a;"></div>
<svg class="a" style="left:1325.7px;top:362.4px;" width="16" height="16" viewBox="0 0 16 16"><rect x="0" y="0" width="16" height="16" rx="2" fill="#f5a623"/><path d="M4.5 3.5H11.5V6H7.2V7.6H10.6V10H7.2V13H4.5Z" fill="#555"/></svg>
<span id="t46" class="t" style="left:1337.60px;top:388.70px;font-size:11.60px;font-family:'Liberation Mono',monospace;color:#f6f6f6;-webkit-text-stroke:0.4px #f6f6f6;transform-origin:0 0;transform:rotate(90deg) scaleX(0.9859)">FUSION 360</span>
<div class="a" style="left:1320px;top:503.4px;width:27.3px;height:145.6px;background:#4a4a4a;"></div>
<svg class="a" style="left:1325.7px;top:522.8px;" width="16" height="16" viewBox="0 0 16 16"><rect x="0" y="0" width="16" height="16" rx="2" fill="#f5a623"/><path d="M4.5 3.5H11.5V6H7.2V7.6H10.6V10H7.2V13H4.5Z" fill="#555"/></svg>
<span id="t47" class="t" style="left:1337.60px;top:549.00px;font-size:11.60px;font-family:'Liberation Mono',monospace;color:#f6f6f6;-webkit-text-stroke:0.4px #f6f6f6;transform-origin:0 0;transform:rotate(90deg) scaleX(0.9931)">FUSION TEAM</span>
<div class="a" style="left:0px;top:703.5px;width:1366px;height:24.5px;background:#efefef;"></div>
<span id="t48" class="t" style="left:6.00px;top:711.00px;font-size:12.50px;color:#303030;font-weight:normal;transform:scaleX(1.0149);transform-origin:0 0;">Left-click &amp; drag to define group (or left-click to start defining a group polygon)</span>
<div class="a" style="left:1314px;top:705px;width:1px;height:21px;background:#d0d0d0;"></div>
<div class="a" style="left:1340px;top:705px;width:1px;height:21px;background:#d0d0d0;"></div>
<svg class="a" style="left:1318px;top:705px;" width="20" height="22" viewBox="0 0 20 22"><path d="M15.7 1.3L1.3 10.5L11.3 12L6.2 21.2L20.5 11.2L10.9 9.6Z" fill="#14b04a"/></svg>
<svg class="a" style="left:1344px;top:705px;" width="22" height="22" viewBox="0 0 22 22"><circle cx="11" cy="11" r="10" fill="#666"/><rect x="9.6" y="3.5" width="2.8" height="10.2" fill="#fff"/><rect x="9.6" y="15.3" width="2.8" height="2.8" fill="#fff"/></svg>
<div class="a" style="left:0px;top:728px;width:1366px;height:40px;background:linear-gradient(90deg,#2c2b24 0%,#2c2b23 40%,#2d2c25 47%,#382d27 52%,#3a2e27 58%,#30302a 70%,#33352a 80%,#383628 100%);"></div>
<div class="a" style="left:0px;top:728px;width:48px;height:40px;background:#3a3226;"></div>
<div class="a" style="left:48px;top:728px;width:344px;height:40px;background:#f0f0f0;"></div>
<svg class="a" style="left:14px;top:738px;" width="20" height="20" viewBox="0 0 20 20"><path d="M1.8 3.3L8.8 2.3V9.3H1.8ZM9.8 2.2L18.2 1V9.3H9.8ZM1.8 10.3H8.8V17.3L1.8 16.3ZM9.8 10.3H18.2V18.6L9.8 17.4Z" fill="#fff"/></svg>
<svg class="a" style="left:58px;top:739px;" width="20" height="20" viewBox="0 0 20 20"><circle cx="12.2" cy="7.3" r="5.3" fill="none" stroke="#222" stroke-width="1.3"/><path d="M8.4 11.1L2.6 16.9" stroke="#222" stroke-width="1.5"/></svg>
<span id="t49" class="t" style="left:88.80px;top:741.00px;font-size:15.00px;color:#303030;font-weight:normal;transform:scaleX(0.9594);transform-origin:0 0;">Escribe aquí para buscar</span>
<div class="a" style="left:542px;top:728px;width:45px;height:40px;background:#57554d;"></div>
<div class="a" style="left:399px;top:766px;width:40px;height:2px;background:#76b9ed;"></div>
<div class="a" style="left:448px;top:766px;width:40px;height:2px;background:#76b9ed;"></div>
<div class="a" style="left:497px;top:766px;width:40px;height:2px;background:#76b9ed;"></div>
<div class="a" style="left:542px;top:766px;width:45px;height:2px;background:#76b9ed;"></div>
<div class="a" style="left:595px;top:766px;width:40px;height:2px;background:#76b9ed;"></div>
<div class="a" style="left:586px;top:728px;width:3.5px;height:40px;background:#4a4842;"></div>
<svg class="a" style="left:407px;top:737px;" width="24" height="22" viewBox="0 0 24 22"><path d="M1 2H9.5L11 3.5H22.3V19H1Z" fill="#e8a21a"/><path d="M1 4.5H22.3V19H1Z" fill="#ffd35a"/><path d="M5.1 12H19V20H15V15H9.1V20H5.1Z" fill="#2b8ee3"/></svg>
<svg class="a" style="left:456px;top:736px;" width="26" height="26" viewBox="0 0 26 26"><circle cx="11.7" cy="12" r="11" fill="#db4437"/><path d="M11.7 12L2.2 6.5A11 11 0 0 0 11.7 23Z" fill="#0f9d58"/><path d="M11.7 12L21.2 6.5A11 11 0 0 1 16 22.2Z" fill="#f4c20d"/><circle cx="11.7" cy="12" r="5" fill="#fff"/><circle cx="11.7" cy="12" r="3.9" fill="#4285f4"/><circle cx="18" cy="17.4" r="7.8" fill="#1a1410"/><path d="M10.6 18.5C12.5 15.5 15 14.5 18 15.3C20.5 15.8 23 15 25.5 16.5V20.5C22 22.5 14 23.5 10.6 20.5Z" fill="#c89550"/><path d="M12 21.5Q18 26 24 21.5V23Q18 27 12 23Z" fill="#fff"/></svg>
<svg class="a" style="left:504px;top:736px;" width="27" height="24" viewBox="0 0 27 24"><circle cx="16.5" cy="4.3" r="3.4" fill="#7b83eb"/><circle cx="23.3" cy="6.3" r="2.6" fill="#5059c9"/><path d="M18.5 9.6H26V17A4 4 0 0 1 18.5 17Z" fill="#5059c9"/><path d="M9.5 9.6H21V18.5A6 6 0 0 1 9.5 18.5Z" fill="#7b83eb"/><rect x="1" y="6.5" width="12.5" height="12.5" rx="1.3" fill="#4b53bc"/><path d="M3.8 9.4H10.7V11.1H8.2V16.4H6.3V11.1H3.8Z" fill="#fff"/></svg>
<svg class="a" style="left:556px;top:735px;" width="20" height="26" viewBox="0 0 20 26"><defs><linearGradient id="eg" x1="0" y1="0" x2="1" y2="1"><stop offset="0" stop-color="#f0a040"/><stop offset="1" stop-color="#d0751f"/></linearGradient></defs><path d="M3 1.5C8.5 0.8 14 1 17.5 2.2L17.2 7.6C13.5 6 9.5 5.6 6.5 6.2C7.5 9 10.5 11.5 14.5 12.4C10.5 13 7.8 15 7.2 18.2C10.5 19.2 14 19.2 17.5 18.6L17.2 23.8C12.5 25 7.5 25 3 23.8C5 16.5 5 8.5 3 1.5Z" fill="url(#eg)"/><path d="M6.5 6.2C7.5 9 10.5 11.5 14.5 12.4C10.5 13 7.8 15 7.2 18.2C6 14 6 10 6.5 6.2Z" fill="#b85f18" opacity="0.6"/></svg>
<svg class="a" style="left:602px;top:737px;" width="26" height="22" viewBox="0 0 26 22"><rect x="7" y="1.5" width="18" height="19" rx="1.2" fill="#2b7cd3"/><rect x="7" y="1.5" width="18" height="5" fill="#41a5ee"/><rect x="7" y="6.5" width="18" height="4.8" fill="#2b7cd3"/><rect x="7" y="11.3" width="18" height="4.8" fill="#185abd"/><rect x="7" y="16.1" width="18" height="4.4" fill="#103f91"/><rect x="0.5" y="5.5" width="13" height="12" rx="1" fill="#185abd"/><path d="M2.3 8.2L3.9 15H5.2L7 10.5L8.8 15H10.1L11.7 8.2H10.3L9.3 12.8L7.6 8.6H6.4L4.7 12.8L3.7 8.2Z" fill="#fff"/></svg>
<svg class="a" style="left:919px;top:738px;" width="21" height="20" viewBox="0 0 21 20"><path d="M9.5 2.5C4 5 2 13 8.5 16.5C12 18.5 17 17.5 19 13.5C13.5 15 8.5 10 9.5 2.5Z" fill="#f5c518"/><path d="M12.8 2.8A1.6 1.6 0 1 1 16 2.8V6A1.6 1.6 0 1 1 12.8 6Z" fill="#e0242a"/><circle cx="14.4" cy="9" r="1.2" fill="#e0242a"/></svg>
<span id="t50" class="t" style="left:949.20px;top:742.00px;font-size:14.50px;color:#f0f0f0;font-weight:normal;transform:scaleX(0.8949);transform-origin:0 0;">23°C</span>
<span id="t51" class="t" style="left:987.50px;top:742.00px;font-size:14.50px;color:#f0f0f0;font-weight:normal;transform:scaleX(0.9304);transform-origin:0 0;">Despejado</span>
<svg class="a" style="left:1066px;top:738px;" width="110" height="20" viewBox="0 0 110 20"><path d="M3 11.5L9 5.5L15 11.5" fill="none" stroke="#eee" stroke-width="1.2"/><rect x="29" y="1.8" width="7" height="11.5" rx="3.5" fill="#eee"/><path d="M26.5 9A5.8 5.8 0 0 0 38.5 9M32.5 15V17.5M29.5 17.6H35.5" fill="none" stroke="#eee" stroke-width="1.1"/><path d="M53 3.5Q57 1.5 61 3.5M53 16.5Q57 18.5 61 16.5" fill="none" stroke="#eee" stroke-width="1"/><rect x="52.3" y="6.3" width="7.5" height="7" rx="1" fill="none" stroke="#eee" stroke-width="1.1"/><path d="M59.8 8.5L63 7V12.5L59.8 11" fill="none" stroke="#eee" stroke-width="1"/></svg>
<svg class="a" style="left:1137px;top:736px;" width="70" height="22" viewBox="0 0 70 22"><path d="M3.5 3V7M6.5 3V7M2.5 7H7.5V10A2.5 2.5 0 0 1 2.5 10ZM5 12.5V16" fill="none" stroke="#eee" stroke-width="1.1"/><rect x="9.5" y="7.5" width="9" height="7.5" fill="none" stroke="#aaa" stroke-width="0.9"/><path d="M18.5 10h1v2.5h-1" stroke="#aaa" fill="none"/><path d="M11.8 9.3L15.6 13M15.6 9.3L11.8 13" stroke="#eee" stroke-width="1"/><path d="M30 18A10 10 0 0 1 40 8M33 18A7 7 0 0 1 40 11M36 18A4 4 0 0 1 40 14" fill="none" stroke="#aaa" stroke-width="1.1"/><circle cx="40.5" cy="17.5" r="1.5" fill="#eee"/><path d="M50 8.5H53L57 5V17.5L53 14H50Z" fill="none" stroke="#eee" stroke-width="1.1"/><path d="M59.5 9A3 3 0 0 1 59.5 13.5M62 7A6 6 0 0 1 62 15.5M64.5 5A9 9 0 0 1 64.5 17.5" fill="none" stroke="#eee" stroke-width="1.1"/></svg>
<span id="t52" class="t" style="left:1215.30px;top:742.00px;font-size:12.50px;color:#f0f0f0;font-weight:normal;transform:scaleX(0.7196);transform-origin:0 0;">ESP</span>
<span id="t53" class="t" style="left:1264.00px;top:733.00px;font-size:12.50px;color:#f0f0f0;font-weight:normal;transform:scaleX(0.8695);transform-origin:0 0;">20:00</span>
<span id="t54" class="t" style="left:1250.00px;top:750.00px;font-size:12.50px;color:#f0f0f0;font-weight:normal;transform:scaleX(0.9079);transform-origin:0 0;">16/03/2022</span>
<svg class="a" style="left:1322px;top:738px;" width="44" height="30" viewBox="0 0 44 30"><path d="M2.5 1.5H18.5V13H9L6 16V13H2.5Z" fill="#f0f0f0"/><path d="M5.5 5H15.5M5.5 7.5H15.5M5.5 10H13" stroke="#3a3a30" stroke-width="1"/><circle cx="18.4" cy="17" r="8.2" fill="#3b3b38" stroke="#888" stroke-width="0.8"/><text x="18.4" y="21.3" font-size="11.5" fill="#fff" text-anchor="middle" font-family="Liberation Sans" textLength="12" lengthAdjust="spacingAndGlyphs">10</text></svg>
<div class="a" style="left:1361px;top:728px;width:1px;height:40px;background:#6a6a62;"></div>
</body></html>
